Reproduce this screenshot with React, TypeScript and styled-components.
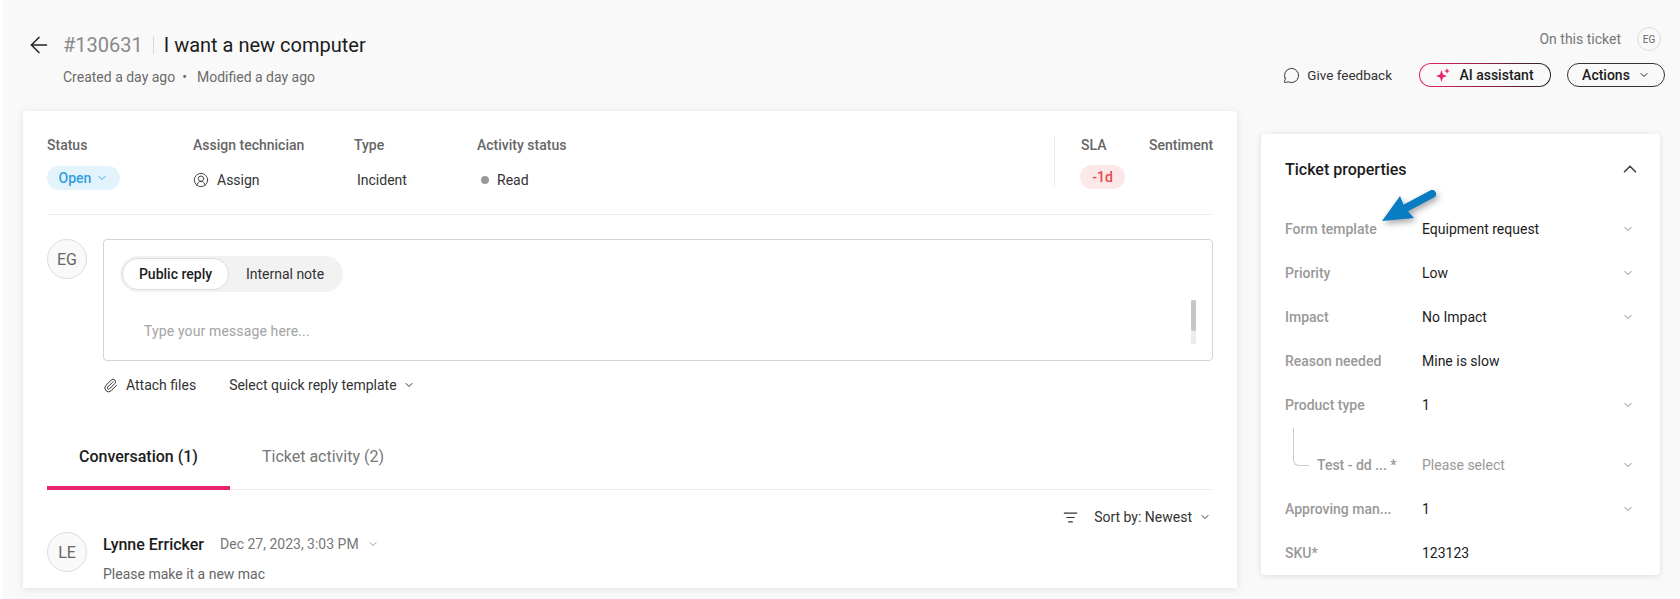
import React from 'react';
import styled, { createGlobalStyle } from 'styled-components';
import { ArrowLeft, ChevronDown, ChevronUp, CircleUserRound, ListFilter, MessageCircle, Paperclip } from 'lucide-react';

const GlobalStyle = createGlobalStyle`
  html, body {
    margin: 0;
    background: #fff;
    font-family: Roboto, "Liberation Sans", sans-serif;
    overflow: hidden;
  }
`;

const Page = styled.div`
  position: relative;
  box-sizing: border-box;
  width: 1677px;
  height: 599px;
  margin-left: 3px;
  padding: 0 12px 0 20px;
  background: #f9f9f9;
  overflow: hidden;
`;

const Header = styled.header`
  display: flex;
  justify-content: space-between;
  height: 111px;
`;

const TitleBlock = styled.div`
  padding: 31px 0 0 8px;
`;

const TitleRow = styled.div`
  display: flex;
  align-items: center;
  height: 28px;
  font-size: 20px;
  color: #1c1c1c;
`;

const BackButton = styled.span`
  display: flex;
  width: 32px;
  margin-left: -5px;
  margin-right: 5px;
  color: #222;
`;

const TicketNo = styled.span`
  color: #8a8a8a;
`;

const TitleSep = styled.span`
  width: 1px;
  height: 18px;
  margin: 0 10px 0 10px;
  background: #d8d8d8;
`;

const SubRow = styled.div`
  display: flex;
  align-items: center;
  margin: 10px 0 0 32px;
  font-size: 14px;
  color: #6b6b6b;
`;

const SubDot = styled.span`
  margin: 0 10px 0 7px;
`;

const ActionsBlock = styled.div`
  display: flex;
  flex-direction: column;
  align-items: flex-end;
  padding: 27px 3px 0 0;
`;

const OnTicket = styled.div`
  display: flex;
  align-items: center;
  gap: 16px;
  margin-right: 4px;
  font-size: 14px;
  color: #777;
`;

const Avatar = styled.span<{ $size: number; $fontSize: number }>`
  display: flex;
  align-items: center;
  justify-content: center;
  flex: none;
  box-sizing: border-box;
  width: ${(p) => p.$size}px;
  height: ${(p) => p.$size}px;
  border: 1px solid #dcdcdc;
  border-radius: 50%;
  background: #f9f9f9;
  font-size: ${(p) => p.$fontSize}px;
  color: #666;
`;

const ActionRow = styled.div`
  display: flex;
  align-items: center;
  margin-top: 12px;
`;

const Feedback = styled.span`
  display: flex;
  align-items: center;
  gap: 7px;
  margin-right: 27px;
  font-size: 13.5px;
  color: #333;
`;

const AiButton = styled.span`
  display: flex;
  align-items: center;
  justify-content: center;
  gap: 9px;
  box-sizing: border-box;
  width: 132px;
  height: 24px;
  margin-right: 16px;
  border: 1px solid transparent;
  border-radius: 12px;
  background: linear-gradient(#f9f9f9, #f9f9f9) padding-box,
    linear-gradient(90deg, #e8246f, #8c1c4c 55%, #222) border-box;
  font-size: 14px;
  font-weight: 500;
  color: #1c1c1c;
`;

const ActionsButton = styled.span`
  display: flex;
  align-items: center;
  justify-content: center;
  gap: 8px;
  box-sizing: border-box;
  width: 98px;
  height: 24px;
  border: 1px solid #333;
  border-radius: 12px;
  font-size: 14px;
  font-weight: 500;
  color: #1c1c1c;
`;

const Body = styled.div`
  display: flex;
  align-items: flex-start;
  gap: 24px;
`;

const MainCard = styled.section`
  box-sizing: border-box;
  width: 1214px;
  height: 477px;
  padding: 0 24px;
  overflow: hidden;
  border-radius: 4px 4px 0 0;
  background: #fff;
  box-shadow: 0 1px 8px rgba(0, 0, 0, 0.1);
`;

const StatusBar = styled.div`
  display: flex;
  height: 104px;
  box-sizing: border-box;
  padding-top: 24px;
  border-bottom: 1px solid #eee;
`;

const StatusCol = styled.div<{ $width: number }>`
  width: ${(p) => p.$width}px;
  flex: none;
`;

const StatusLabel = styled.div`
  height: 20px;
  line-height: 20px;
  font-size: 14px;
  font-weight: 500;
  color: #666;
`;

const StatusValue = styled.div<{ $inset?: number }>`
  display: flex;
  align-items: center;
  gap: 8px;
  height: 24px;
  margin-top: 13px;
  padding-left: ${(p) => p.$inset ?? 0}px;
  font-size: 14px;
  color: #333;
`;

const Spacer = styled.div`
  flex: 1;
`;

const SlaDivider = styled.div`
  width: 1px;
  height: 52px;
  margin: 0 26px 0 0;
  background: #eee;
`;

const OpenPill = styled.span`
  display: flex;
  align-items: center;
  justify-content: center;
  gap: 5px;
  width: 73px;
  height: 24px;
  margin-top: -4px;
  border-radius: 12px;
  background: #e3f3fc;
  font-size: 14px;
  font-weight: 500;
  color: #2f9fe0;
`;

const SlaPill = styled.span`
  display: flex;
  align-items: center;
  justify-content: center;
  width: 45px;
  height: 24px;
  margin: -6px 0 0 -1px;
  border-radius: 12px;
  background: #fce8e8;
  font-size: 14px;
  font-weight: 500;
  color: #e5484d;
`;

const Dot = styled.span`
  width: 8px;
  height: 8px;
  border-radius: 50%;
  background: #999;
`;

const Composer = styled.div`
  display: flex;
  gap: 16px;
  margin-top: 24px;
`;

const EditorColumn = styled.div`
  flex: 1;
`;

const Editor = styled.div`
  position: relative;
  box-sizing: border-box;
  height: 122px;
  padding: 16px 16px;
  border: 1px solid #d4d4d4;
  border-radius: 4px;
`;

const Toggle = styled.div`
  display: inline-flex;
  align-items: center;
  box-sizing: border-box;
  height: 36px;
  padding: 2px;
  border-radius: 18px;
  background: #f2f2f2;
  font-size: 14px;
  color: #333;
`;

const ToggleOption = styled.span<{ $active?: boolean }>`
  display: flex;
  align-items: center;
  justify-content: center;
  box-sizing: border-box;
  width: ${(p) => (p.$active ? 107 : 112)}px;
  height: 32px;
  border-radius: 16px;
  background: ${(p) => (p.$active ? '#fff' : 'transparent')};
  border: ${(p) => (p.$active ? '1px solid #ddd' : 'none')};
  font-weight: ${(p) => (p.$active ? 500 : 400)};
  color: ${(p) => (p.$active ? '#1c1c1c' : '#333')};
`;

const Placeholder = styled.div`
  margin: 29px 0 0 24px;
  line-height: 20px;
  letter-spacing: 0.13px;
  font-size: 14px;
  color: #a3a3a3;
`;

const ScrollTrack = styled.div`
  position: absolute;
  top: 60px;
  right: 16px;
  width: 5px;
  height: 44px;
  background: #ececec;
`;

const ScrollThumb = styled.div`
  height: 31px;
  border-radius: 2px;
  background: #c6c6c6;
`;

const AttachRow = styled.div`
  display: flex;
  align-items: center;
  height: 20px;
  margin-top: 14px;
  font-size: 14px;
  color: #333;
`;

const AttachItem = styled.span`
  display: flex;
  align-items: center;
  gap: 8px;
  margin-right: 33px;
`;

const TemplatePicker = styled(AttachItem)`
  gap: 6px;
`;

const Tabs = styled.div`
  display: flex;
  height: 76px;
  box-sizing: border-box;
  margin-top: 19px;
  border-bottom: 1px solid #eee;
`;

const Tab = styled.div<{ $active?: boolean }>`
  display: flex;
  align-items: flex-start;
  justify-content: center;
  box-sizing: border-box;
  width: ${(p) => (p.$active ? 183 : 186)}px;
  padding-top: 33px;
  margin-bottom: -1px;
  line-height: 20px;
  border-bottom: 4px solid ${(p) => (p.$active ? '#e8246f' : 'transparent')};
  font-size: 16px;
  font-weight: ${(p) => (p.$active ? 500 : 400)};
  color: ${(p) => (p.$active ? '#1c1c1c' : '#777')};
`;

const SortRow = styled.div`
  display: flex;
  align-items: center;
  justify-content: flex-end;
  height: 20px;
  margin-top: 17px;
  padding-right: 2px;
  font-size: 14px;
  color: #333;
`;

const SortIcon = styled.span`
  display: flex;
  margin-right: 16px;
`;

const SortLabel = styled.span`
  margin-right: 7px;
`;

const Comment = styled.div`
  display: flex;
  gap: 16px;
  margin-top: 5px;
`;

const CommentHead = styled.div`
  display: flex;
  align-items: center;
  height: 24px;
  font-size: 14px;
  color: #777;
`;

const CommentAuthor = styled.span`
  margin-right: 16px;
  font-size: 16px;
  font-weight: 500;
  color: #1c1c1c;
`;

const CommentDate = styled.span`
  margin-right: 8px;
`;

const CommentText = styled.div`
  margin-top: 8px;
  line-height: 20px;
  font-size: 14px;
  color: #666;
`;

const SideCard = styled.aside`
  box-sizing: border-box;
  width: 399px;
  height: 441px;
  margin-top: 23px;
  padding: 24px 24px 0;
  border-radius: 4px;
  background: #fff;
  box-shadow: 0 1px 6px rgba(0, 0, 0, 0.12);
`;

const SideHead = styled.div`
  display: flex;
  align-items: center;
  justify-content: space-between;
  height: 22px;
  margin-bottom: 27px;
  font-size: 16px;
  font-weight: 500;
  color: #1c1c1c;
`;

const PropRow = styled.div<{ $nested?: boolean }>`
  display: flex;
  align-items: center;
  height: ${(p) => (p.$nested ? 76 : 44)}px;
  padding-top: ${(p) => (p.$nested ? 32 : 0)}px;
  box-sizing: border-box;
  margin-top: ${(p) => (p.$nested ? -16 : 0)}px;
  font-size: 14px;
`;

const PropLabel = styled.span<{ $nested?: boolean }>`
  position: relative;
  box-sizing: border-box;
  flex: none;
  width: 137px;
  padding-left: ${(p) => (p.$nested ? 32 : 0)}px;
  font-weight: 500;
  color: #999;

  ${(p) =>
    p.$nested &&
    `&::before {
      content: '';
      position: absolute;
      left: 8px;
      top: -29px;
      width: 16px;
      height: 38px;
      box-sizing: border-box;
      border-left: 1px solid #ccc;
      border-bottom: 1px solid #ccc;
      border-bottom-left-radius: 6px;
    }`}
`;

const PropValue = styled.span<{ $muted?: boolean }>`
  flex: 1;
  color: ${(p) => (p.$muted ? '#999' : '#1c1c1c')};
`;

const PropChevron = styled.span`
  display: flex;
  margin-right: 2px;
  color: #555;
`;

const Annotation = styled.svg`
  position: absolute;
  left: 1363px;
  top: 180px;
  filter: drop-shadow(2px 3px 3px rgba(0, 0, 0, 0.35));
`;

const props = [
  { label: 'Form template', value: 'Equipment request', select: true },
  { label: 'Priority', value: 'Low', select: true },
  { label: 'Impact', value: 'No Impact', select: true },
  { label: 'Reason needed', value: 'Mine is slow' },
  { label: 'Product type', value: '1', select: true },
  { label: 'Test - dd ... *', value: 'Please select', select: true, nested: true },
  { label: 'Approving man...', value: '1', select: true },
  { label: 'SKU*', value: '123123' },
];

const Sparkle = () => (
  <svg width="14" height="14" viewBox="0 0 14 14" fill="#e8246f">
    <path d="M5.5 2 L7 6.5 L11 8 L7 9.5 L5.5 14 L4 9.5 L0 8 L4 6.5 Z" />
    <path d="M11 0 L11.8 2.2 L14 3 L11.8 3.8 L11 6 L10.2 3.8 L8 3 L10.2 2.2 Z" />
  </svg>
);

const App = () => {
  return (
    <Page>
      <GlobalStyle />
      <Header>
        <TitleBlock>
          <TitleRow>
            <BackButton>
              <ArrowLeft size={26} strokeWidth={1.4} />
            </BackButton>
            <TicketNo>#130631</TicketNo>
            <TitleSep />
            <span>I want a new computer</span>
          </TitleRow>
          <SubRow>
            <span>Created a day ago</span>
            <SubDot>•</SubDot>
            <span>Modified a day ago</span>
          </SubRow>
        </TitleBlock>
        <ActionsBlock>
          <OnTicket>
            On this ticket
            <Avatar $size={24} $fontSize={10}>EG</Avatar>
          </OnTicket>
          <ActionRow>
            <Feedback>
              <MessageCircle size={17} strokeWidth={1.4} />
              Give feedback
            </Feedback>
            <AiButton>
              <Sparkle />
              AI assistant
            </AiButton>
            <ActionsButton>
              Actions
              <ChevronDown size={12} strokeWidth={2} />
            </ActionsButton>
          </ActionRow>
        </ActionsBlock>
      </Header>
      <Body>
        <MainCard>
          <StatusBar>
            <StatusCol $width={146}>
              <StatusLabel>Status</StatusLabel>
              <StatusValue>
                <OpenPill>
                  Open
                  <ChevronDown size={12} strokeWidth={1.8} />
                </OpenPill>
              </StatusValue>
            </StatusCol>
            <StatusCol $width={161}>
              <StatusLabel>Assign technician</StatusLabel>
              <StatusValue>
                <CircleUserRound size={16} strokeWidth={1.3} />
                Assign
              </StatusValue>
            </StatusCol>
            <StatusCol $width={123}>
              <StatusLabel>Type</StatusLabel>
              <StatusValue $inset={3}>Incident</StatusValue>
            </StatusCol>
            <StatusCol $width={120}>
              <StatusLabel>Activity status</StatusLabel>
              <StatusValue $inset={4}>
                <Dot />
                Read
              </StatusValue>
            </StatusCol>
            <Spacer />
            <SlaDivider />
            <StatusCol $width={68}>
              <StatusLabel>SLA</StatusLabel>
              <StatusValue>
                <SlaPill>-1d</SlaPill>
              </StatusValue>
            </StatusCol>
            <StatusCol $width={64}>
              <StatusLabel>Sentiment</StatusLabel>
            </StatusCol>
          </StatusBar>
          <Composer>
            <Avatar $size={40} $fontSize={16}>EG</Avatar>
            <EditorColumn>
              <Editor>
                <Toggle>
                  <ToggleOption $active>Public reply</ToggleOption>
                  <ToggleOption>Internal note</ToggleOption>
                </Toggle>
                <Placeholder>Type your message here...</Placeholder>
                <ScrollTrack>
                  <ScrollThumb />
                </ScrollTrack>
              </Editor>
              <AttachRow>
                <AttachItem>
                  <Paperclip size={15} strokeWidth={1.6} />
                  Attach files
                </AttachItem>
                <TemplatePicker>
                  Select quick reply template
                  <ChevronDown size={12} strokeWidth={2} />
                </TemplatePicker>
              </AttachRow>
            </EditorColumn>
          </Composer>
          <Tabs>
            <Tab $active>Conversation (1)</Tab>
            <Tab>Ticket activity (2)</Tab>
          </Tabs>
          <SortRow>
            <SortIcon>
              <ListFilter size={15} strokeWidth={1.7} />
            </SortIcon>
            <SortLabel>Sort by: Newest</SortLabel>
            <ChevronDown size={12} strokeWidth={2} />
          </SortRow>
          <Comment>
            <Avatar $size={40} $fontSize={16}>LE</Avatar>
            <div>
              <CommentHead>
                <CommentAuthor>Lynne Erricker</CommentAuthor>
                <CommentDate>Dec 27, 2023, 3:03 PM</CommentDate>
                <ChevronDown size={12} strokeWidth={1.5} />
              </CommentHead>
              <CommentText>Please make it a new mac</CommentText>
            </div>
          </Comment>
        </MainCard>
        <SideCard>
          <SideHead>
            Ticket properties
            <ChevronUp size={22} strokeWidth={1.8} color="#444" style={{ marginRight: -5 }} />
          </SideHead>
          {props.map((row) => (
            <PropRow key={row.label} $nested={row.nested}>
              <PropLabel $nested={row.nested}>{row.label}</PropLabel>
              <PropValue $muted={row.nested}>{row.value}</PropValue>
              {row.select && (
                <PropChevron>
                  <ChevronDown size={12} strokeWidth={1.5} />
                </PropChevron>
              )}
            </PropRow>
          ))}
        </SideCard>
      </Body>
      <Annotation width="76" height="50" viewBox="0 0 76 50">
        <path d="M66 14 L36 30" stroke="#0a7cc4" strokeWidth="8" strokeLinecap="round" />
        <path d="M16 41 L34 16 L39 28 L48 38 Z" fill="#0a7cc4" />
      </Annotation>
    </Page>
  );
};

export default App;
